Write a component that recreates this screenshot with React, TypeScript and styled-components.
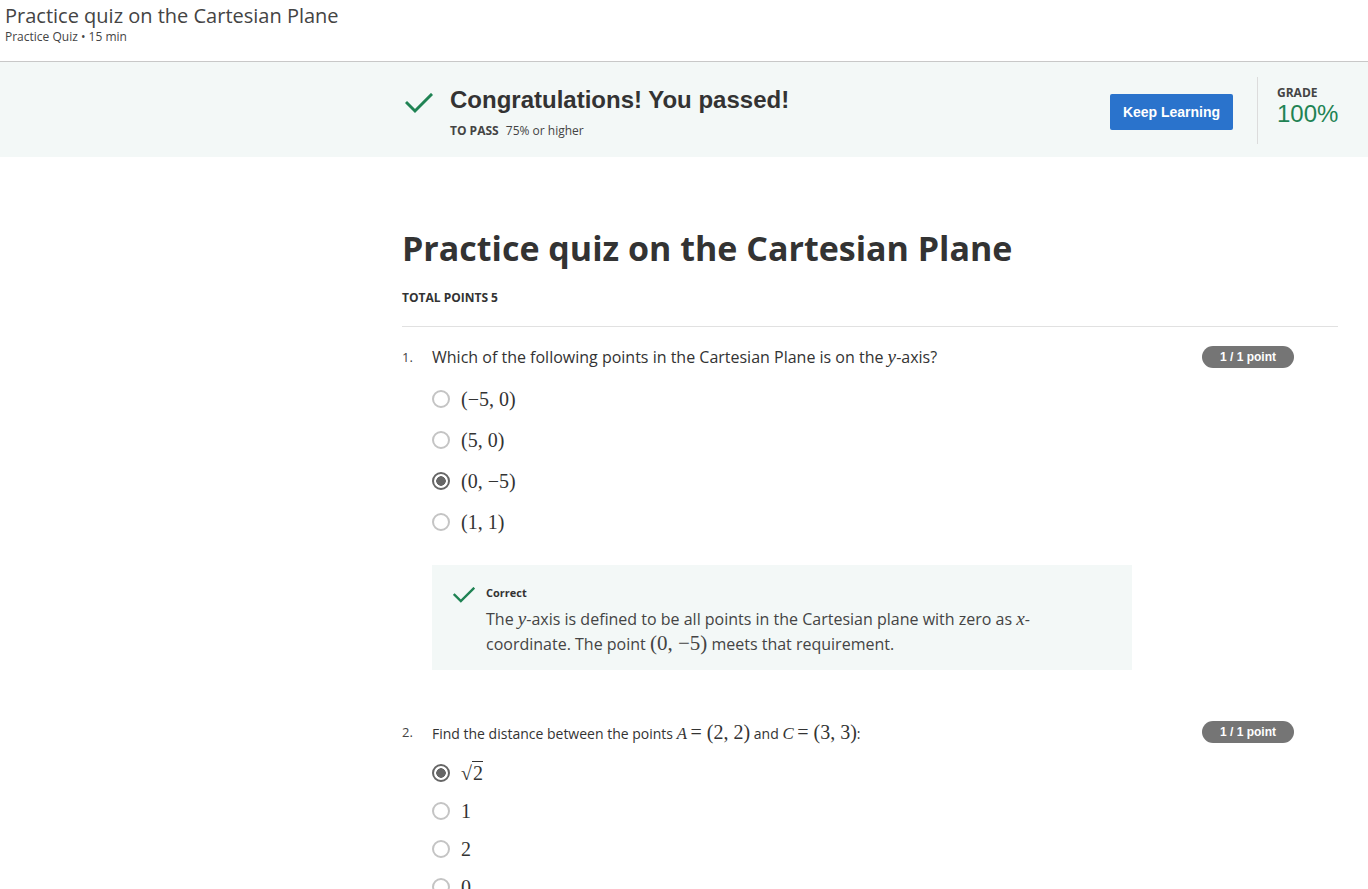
import type { ReactNode } from "react";
import { createGlobalStyle, styled } from "styled-components";

const GlobalStyle = createGlobalStyle`
  body {
    margin: 0;
    background: #ffffff;
    font-family: "Open Sans", Arial, sans-serif;
    color: #333333;
  }
`;

function CheckIcon({ size = 28, color = "#1f8354" }: { size?: number; color?: string }) {
  return (
    <svg width={size} height={size * 0.75} viewBox="0 0 28 21" fill="none">
      <polyline points="2,10 10,18 26,2" stroke={color} strokeWidth="3" strokeLinecap="square" />
    </svg>
  );
}

const M = ({ children }: { children: ReactNode }) => <MathText>{children}</MathText>;
const V = ({ children }: { children: ReactNode }) => <MathVar>{children}</MathVar>;

type Opt = { label: ReactNode; checked?: boolean };

function Options({ items, gap, top }: { items: Opt[]; gap: number; top: number }) {
  return (
    <OptionList $gap={gap} $top={top}>
      {items.map((o, i) => (
        <Option key={i}>
          <Radio $checked={!!o.checked} />
          {o.label}
        </Option>
      ))}
    </OptionList>
  );
}

export default function App() {
  const q1: Opt[] = [
    { label: <M>(−5, 0)</M> },
    { label: <M>(5, 0)</M> },
    { label: <M>(0, −5)</M>, checked: true },
    { label: <M>(1, 1)</M> },
  ];

  const q2: Opt[] = [
    { label: <M>√<Over>2</Over></M>, checked: true },
    { label: <M>1</M> },
    { label: <M>2</M> },
    { label: <M>0</M> },
  ];

  return (
    <>
      <GlobalStyle />
      <TopBar>
        <PageTitle>Practice quiz on the Cartesian Plane</PageTitle>
        <PageMeta>Practice Quiz • 15 min</PageMeta>
      </TopBar>
      <Banner>
        <BannerMain>
          <BannerCheck>
            <CheckIcon />
          </BannerCheck>
          <div>
            <Congrats>Congratulations! You passed!</Congrats>
            <PassLine>
              <b>TO PASS</b> 75% or higher
            </PassLine>
          </div>
        </BannerMain>
        <KeepButton>Keep Learning</KeepButton>
        <Grade>
          <GradeLabel>GRADE</GradeLabel>
          <GradeValue>100%</GradeValue>
        </Grade>
      </Banner>
      <Main>
        <Heading>Practice quiz on the Cartesian Plane</Heading>
        <TotalPoints>TOTAL POINTS 5</TotalPoints>
        <Question>
          <QuestionRow>
            <QNum>1.</QNum>
            <QText>
              Which of the following points in the Cartesian Plane is on the <V>y</V>-axis?
            </QText>
            <Badge>1 / 1 point</Badge>
          </QuestionRow>
          <Options items={q1} gap={19} top={20} />
          <Feedback>
            <FeedbackCheck>
              <CheckIcon size={22} />
            </FeedbackCheck>
            <div>
              <FeedbackTitle>Correct</FeedbackTitle>
              <FeedbackText>
                The <V>y</V>-axis is defined to be all points in the Cartesian plane with zero as <V>x</V>-
                <br />
                coordinate. The point <BigMath>(0, −5)</BigMath> meets that requirement.
              </FeedbackText>
            </div>
          </Feedback>
        </Question>
        <Question>
          <QuestionRow>
            <QNum>2.</QNum>
            <QText $small>
              Find the distance between the points <V>A</V> <M>= (2, 2)</M> and <V>C</V> <M>= (3, 3)</M>:
            </QText>
            <Badge>1 / 1 point</Badge>
          </QuestionRow>
          <Options items={q2} gap={16} top={19} />
        </Question>
      </Main>
    </>
  );
}

const TopBar = styled.header`
  height: 62px;
  padding: 3px 0 0 5px;
  box-sizing: border-box;
  border-bottom: 1px solid #c8c8c8;
`;

const PageTitle = styled.div`
  font-size: 20px;
  line-height: 26px;
  color: #444444;
`;

const PageMeta = styled.div`
  font-size: 12px;
  line-height: 16px;
  color: #444444;
`;

const Banner = styled.section`
  display: flex;
  align-items: center;
  height: 95px;
  padding: 0 0 0 405px;
  background: #f3f8f7;
  box-sizing: border-box;
`;

const BannerMain = styled.div`
  display: flex;
  align-items: flex-start;
  flex: 1;
  margin-top: 4px;
`;

const BannerCheck = styled.div`
  width: 45px;
  padding-top: 9px;
`;

const Congrats = styled.h1`
  margin: 0;
  font-family: "Liberation Sans", Arial, sans-serif;
  font-size: 24px;
  line-height: 32px;
  font-weight: 700;
  color: #333333;
`;

const PassLine = styled.div`
  margin-top: 6px;
  font-size: 12px;
  color: #444444;

  b {
    font-weight: 700;
    margin-right: 4px;
  }
`;

const KeepButton = styled.button`
  width: 123px;
  height: 36px;
  margin-top: 4px;
  border: none;
  border-radius: 2px;
  background: #2a73cc;
  color: #ffffff;
  font-family: "Liberation Sans", Arial, sans-serif;
  font-size: 14px;
  font-weight: 700;
  cursor: pointer;
`;

const Grade = styled.div`
  margin-left: 24px;
  height: 67px;
  padding-left: 19px;
  width: 111px;
  border-left: 1px solid #dcdcdc;
  box-sizing: border-box;
  padding-top: 8px;
  margin-top: 2px;
`;

const GradeLabel = styled.div`
  font-size: 12px;
  font-weight: 700;
  color: #444444;
  line-height: 16px;
`;

const GradeValue = styled.div`
  font-family: "Liberation Sans", Arial, sans-serif;
  font-size: 24px;
  line-height: 26px;
  color: #1f8354;
`;

const Main = styled.main`
  padding: 68px 30px 0 402px;
`;

const Heading = styled.h2`
  margin: 0;
  font-size: 34px;
  line-height: 46px;
  font-weight: 700;
  color: #333333;
`;

const TotalPoints = styled.div`
  margin-top: 19px;
  padding-bottom: 20px;
  font-size: 12px;
  font-weight: 700;
  line-height: 16px;
  border-bottom: 1px solid #e1e1e1;
`;

const Question = styled.div`
  padding: 19px 44px 0 0;

  & + & {
    padding-top: 51px;
  }
`;

const QuestionRow = styled.div`
  display: flex;
  align-items: center;
  height: 22px;
`;

const QNum = styled.span`
  width: 30px;
  font-size: 13px;
  color: #444444;
`;

const QText = styled.span<{ $small?: boolean }>`
  flex: 1;
  font-size: ${(p) => (p.$small ? "14px" : "16px")};
  color: #333333;
`;

const Badge = styled.span`
  width: 92px;
  height: 22px;
  line-height: 22px;
  border-radius: 11px;
  background: #757575;
  color: #ffffff;
  text-align: center;
  font-family: "Liberation Sans", Arial, sans-serif;
  font-size: 12px;
  font-weight: 700;
`;

const OptionList = styled.div<{ $gap: number; $top: number }>`
  display: flex;
  flex-direction: column;
  gap: ${(p) => p.$gap}px;
  padding: ${(p) => p.$top}px 0 0 30px;
`;

const Option = styled.label`
  display: flex;
  align-items: center;
  gap: 11px;
  height: 22px;
`;

const Radio = styled.span<{ $checked: boolean }>`
  width: 18px;
  height: 18px;
  border-radius: 50%;
  box-sizing: border-box;
  border: 2px solid ${(p) => (p.$checked ? "#666666" : "#c4c4c4")};
  background: ${(p) => (p.$checked ? "radial-gradient(circle, #666666 0 4.5px, #ffffff 5px)" : "#ffffff")};
`;

const MathText = styled.span`
  font-family: "Liberation Serif", "DejaVu Serif", serif;
  font-size: 20px;
  color: #333333;
`;

const MathVar = styled.span`
  font-family: "Liberation Serif", "DejaVu Serif", serif;
  font-style: italic;
  font-size: 1.2em;
`;

const Over = styled.span`
  border-top: 1px solid #333333;
  padding-left: 1px;
`;

const BigMath = styled.span`
  font-family: "Liberation Serif", "DejaVu Serif", serif;
  font-size: 21px;
`;

const Feedback = styled.div`
  display: flex;
  width: 700px;
  margin: 32px 0 0 30px;
  padding: 19px 0 14px 21px;
  box-sizing: border-box;
  background: #f3f8f7;
`;

const FeedbackCheck = styled.div`
  width: 33px;
  padding-top: 2px;
`;

const FeedbackTitle = styled.div`
  font-size: 11px;
  font-weight: 700;
  line-height: 18px;
  color: #333333;
`;

const FeedbackText = styled.div`
  margin-top: 5px;
  font-size: 16px;
  line-height: 24px;
  color: #444444;
`;
